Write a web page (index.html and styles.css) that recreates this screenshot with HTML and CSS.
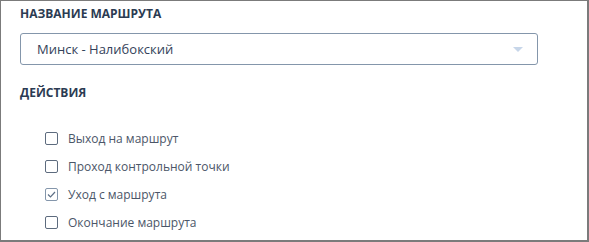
FILE: index.html
```html
<!DOCTYPE html>
<html>
<head lang="ru">
<meta charset="UTF-8">
<title>Маршрут</title>
<link rel="stylesheet" href="styles.css">
</head>
<body>
<div class="panel">
    <div class="title">НАЗВАНИЕ МАРШРУТА</div>
    <div class="select">
        <span class="value">Минск - Налибокский</span>
        <span class="arrow"></span>
    </div>
    <div class="title actions">ДЕЙСТВИЯ</div>
    <ul class="checks">
        <li><span class="box"></span>Выход на маршрут</li>
        <li><span class="box"></span>Проход контрольной точки</li>
        <li><span class="box on"><svg width="9" height="7" viewBox="0 0 9 7"><path d="M1 3.5 L3.5 6 L8 1" fill="none" stroke="#5d6f86" stroke-width="1.2"/></svg></span>Уход с маршрута</li>
        <li><span class="box"></span>Окончание маршрута</li>
    </ul>
</div>
</body>
</html>
```

FILE: styles.css
```css
*{
    margin:0;
    padding:0;
    list-style:none;
    box-sizing:border-box;
}
body{
    font-family:"Open Sans", "DejaVu Sans", sans-serif;
    background:#fff;
}
.panel{
    width:589px;
    height:242px;
    border:1px solid #7b7b7b;
    border-width:1px 2px 2px 1px;
    padding:4px 19px 0;
}
.title{
    font-size:12px;
    font-weight:700;
    line-height:18px;
    color:#2b3b52;
}
.select{
    display:flex;
    align-items:center;
    justify-content:space-between;
    width:518px;
    height:32px;
    margin-top:10px;
    padding:0 14px 0 16px;
    border:1px solid #8496ab;
    border-radius:3px;
}
.value{
    font-size:13px;
    color:#34425a;
}
.arrow{
    width:0;
    height:0;
    border-left:5px solid transparent;
    border-right:5px solid transparent;
    border-top:5px solid #c7d6e9;
}
.actions{
    margin-top:19px;
}
.checks{
    margin-top:22px;
    padding-left:25px;
}
.checks li{
    display:flex;
    align-items:center;
    height:28.2px;
    font-size:12px;
    color:#4b5668;
}
.box{
    display:flex;
    align-items:center;
    justify-content:center;
    width:13px;
    height:13px;
    margin-right:10px;
    border:1px solid #5d6b7e;
    border-radius:2px;
}
.box.on{
    border-color:#8496ab;
}
```
